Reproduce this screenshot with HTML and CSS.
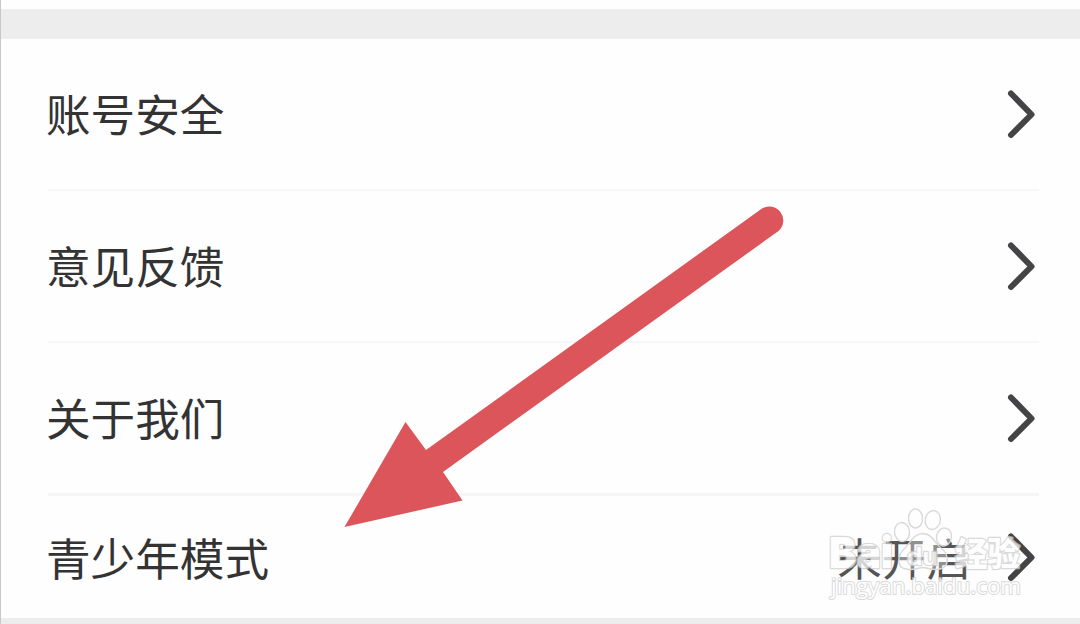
FILE: index.html
```html
<!DOCTYPE html>
<html lang="zh-CN">
  <head>
    <meta charset="UTF-8" />
    <meta name="viewport" content="width=device-width, initial-scale=1.0" />
    <title>设置</title>
    <link rel="stylesheet" href="styles.css">
  </head>
  <body>
    <div class="page">
      <div class="band"></div>
      <ul class="menu">
        <li class="item">
          <span class="label">账号安全</span>
          <svg class="chevron" viewBox="0 0 30 50"><path d="M4 4.500L24.500 25.500L4 46" /></svg>
        </li>
        <li class="item">
          <span class="label">意见反馈</span>
          <svg class="chevron" viewBox="0 0 30 50"><path d="M4 4.500L24.500 25.500L4 46" /></svg>
        </li>
        <li class="item item_about">
          <span class="label">关于我们</span>
          <svg class="chevron" viewBox="0 0 30 50"><path d="M4 4.500L24.500 25.500L4 46" /></svg>
        </li>
        <li class="item item_teen">
          <span class="label">青少年模式</span>
          <span class="value">未开启</span>
          <svg class="chevron" viewBox="0 0 30 50"><path d="M4 4.500L24.500 25.500L4 46" /></svg>
        </li>
      </ul>
      <div class="band band_bottom"></div>

      <svg class="arrow" viewBox="0 0 440 324">
        <path d="M0.500 322L61.500 217L82 245L418 3.500A14 14 0 0 1 434.500 26L99 267L118.500 295.500Z" />
      </svg>

      <!-- watermark -->
      <svg class="watermark" viewBox="0 0 200 96">
        <g class="paw">
          <ellipse cx="87.500" cy="12.500" rx="7" ry="9.500" />
          <ellipse cx="104.800" cy="14" rx="7.500" ry="9.500" transform="rotate(12 104.800 14)" />
          <ellipse cx="74" cy="26" rx="7.500" ry="9.500" transform="rotate(-8 74 26)" />
          <ellipse cx="116" cy="31" rx="7.500" ry="9" transform="rotate(12 116 31)" />
          <path d="M95 27.500C85 28 83 36 77 42C69 49 68 61 78 63C86 65 90 61.500 95 61.500C100 61.500 104 65 112 63C122 61 121 48 113 42C106 37 105 28 95 27.500Z" />
        </g>
        <g class="words">
          <text class="brand" x="1" y="62" textLength="64" lengthAdjust="spacingAndGlyphs">Bai</text>
          <text class="brand_du" x="79" y="58.500" textLength="31" lengthAdjust="spacingAndGlyphs">du</text>
          <text class="brand_cn" x="127" y="60" textLength="65" lengthAdjust="spacingAndGlyphs">经验</text>
          <text class="site" x="3" y="88" textLength="190" lengthAdjust="spacingAndGlyphs">jingyan.baidu.com</text>
        </g>
      </svg>
    </div>
  </body>
</html>
```
FILE: styles.css
```css
body {
  margin: 0;
  background-color: #fefefe;
  font-family: "Noto Sans CJK SC", sans-serif;
  color: #333;
}
.page {
  position: relative;
  box-sizing: border-box;
  height: 624px;
  padding-top: 9px;
  border-left: 1px solid #c8c8c8;
  overflow: hidden;
}
.band {
  height: 30px;
  background-color: #ededed;
}
.band_bottom {
  height: 6px;
}
.menu {
  margin: 0;
  padding: 0 41px 0 47px;
  list-style: none;
}
.item {
  box-sizing: border-box;
  display: flex;
  align-items: center;
  height: 152px;
  padding-right: 2px;
  border-bottom: 2px solid #f7f7f7;
}
.item_about {
  height: 153px;
  padding-bottom: 1px;
  border-bottom: 3px solid #f5f5f5;
}
.item_teen {
  height: 122px;
  border-bottom: 0;
}
.label {
  flex: 1;
  margin-left: -2px;
  padding-bottom: 2px;
  font-size: 44.6px;
  line-height: 60px;
}
.item_teen .label {
  padding-bottom: 0;
}
.value {
  margin-right: 36px;
  font-size: 44.6px;
  line-height: 60px;
  color: #555;
}
.chevron {
  width: 30px;
  height: 50px;
  fill: none;
  stroke: #444446;
  stroke-width: 6;
  stroke-linecap: round;
  stroke-linejoin: round;
}
.arrow {
  position: absolute;
  left: 343px;
  top: 205px;
  width: 440px;
  height: 324px;
  fill: #db555a;
}
.watermark {
  position: absolute;
  left: 827px;
  top: 506px;
  width: 200px;
  height: 96px;
  overflow: visible;
}
.paw {
  fill: rgba(255, 255, 255, 0.35);
  stroke: #d9d9d9;
  stroke-width: 1.4;
}
.words {
  fill: #fff;
  stroke: #cecece;
  stroke-width: 2.4;
  stroke-linejoin: round;
  paint-order: stroke;
  opacity: 0.75;
}
.brand {
  font: 900 43px Inter, "Liberation Sans", sans-serif;
}
.brand_du {
  font: bold 23px "Liberation Sans", sans-serif;
}
.brand_cn {
  font: 900 33px "Noto Sans CJK SC", sans-serif;
}
.site {
  font: 22px "Open Sans", sans-serif;
  stroke-width: 2;
}
```
